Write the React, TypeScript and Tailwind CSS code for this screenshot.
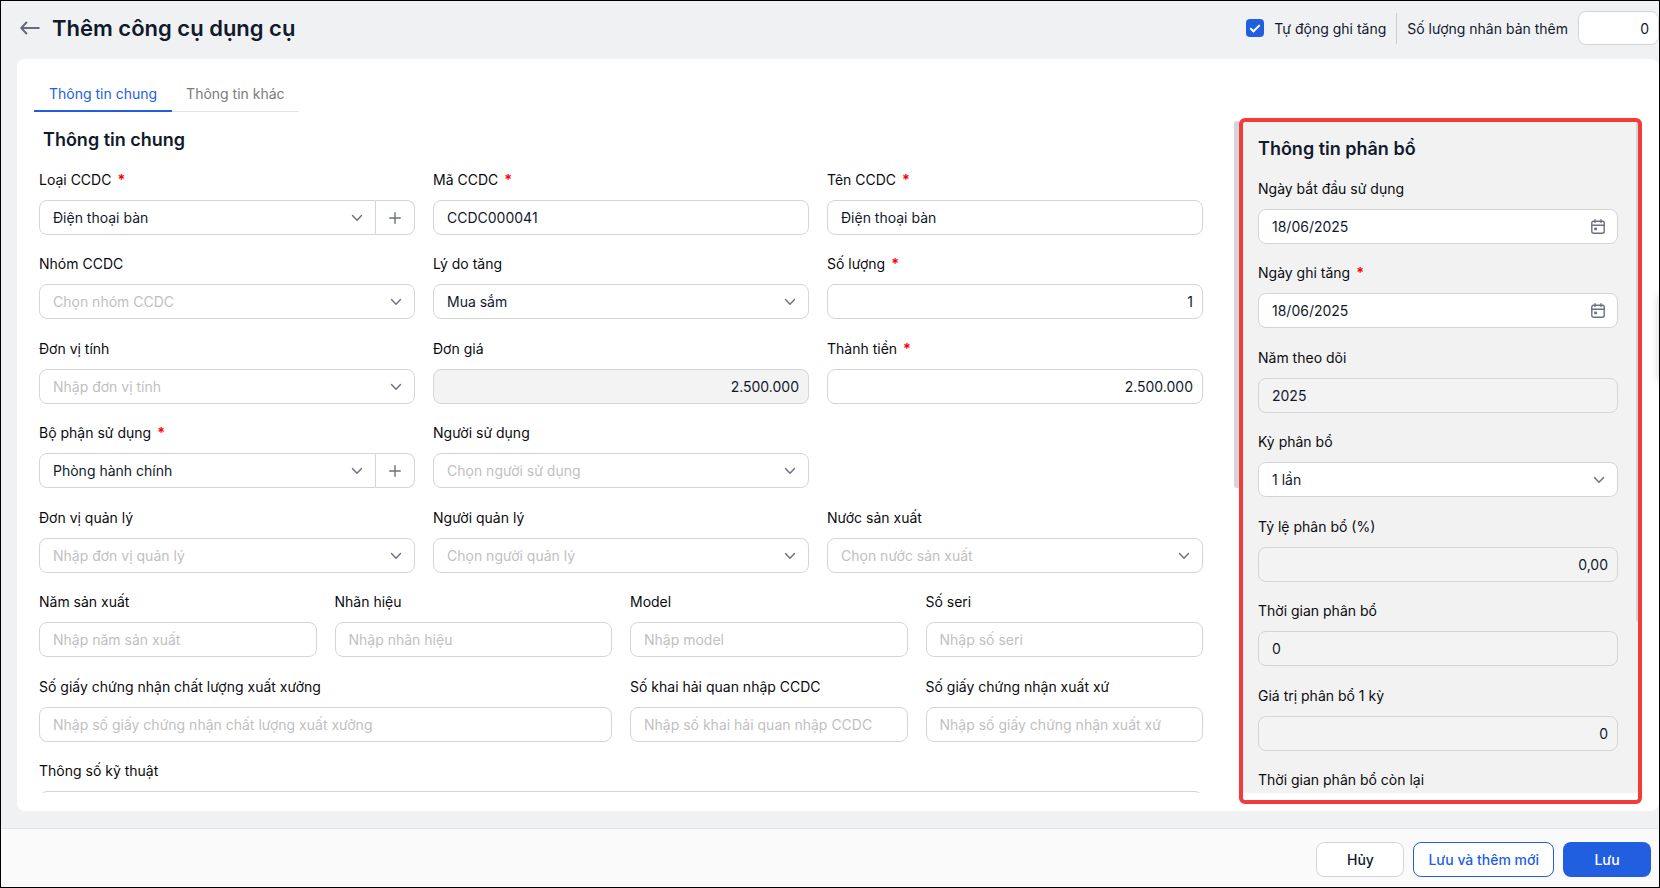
import { useId } from "react";
import type { ReactNode } from "react";

type Option = { value?: string; placeholder?: string };

const BOX =
  "h-[35px] w-full rounded-lg border border-[#d4d5d9] px-[13px] text-[14px] text-[#111a2c] outline-none placeholder:text-[#bfbfbf] disabled:bg-[#f3f3f3] disabled:text-[#111a2c] disabled:opacity-100";

const STACK = "flex flex-col gap-[18px] [&>*:nth-child(2n+3)]:mt-px";

function ArrowLeftIcon() {
  return (
    <svg width="20" height="14" viewBox="0 0 20 14" fill="none" stroke="#666b7c" strokeWidth="2" strokeLinecap="round" strokeLinejoin="round" aria-hidden="true">
      <path d="M18.8 7H1.4M6.4 1.5 1.3 7l5.1 5.5" />
    </svg>
  );
}

function ChevronIcon() {
  return (
    <svg width="12" height="12" viewBox="0 0 12 12" fill="none" stroke="#6b7080" strokeWidth="1.4" strokeLinecap="round" strokeLinejoin="round" aria-hidden="true">
      <path d="M1.5 3.6 6 8.2l4.5-4.6" />
    </svg>
  );
}

function PlusIcon() {
  return (
    <svg width="12" height="12" viewBox="0 0 12 12" fill="none" stroke="#6b7080" strokeWidth="1.4" strokeLinecap="round" aria-hidden="true">
      <path d="M6 .7v10.6M.7 6h10.6" />
    </svg>
  );
}

function CalendarIcon() {
  return (
    <svg width="14" height="15" viewBox="0 0 14 15" fill="none" stroke="#6b7080" strokeWidth="1.4" strokeLinecap="round" strokeLinejoin="round" aria-hidden="true">
      <rect x="0.8" y="2.2" width="12.4" height="12" rx="1.8" />
      <path d="M.8 6.2h12.4M4 .7v2.8M10 .7v2.8" />
      <rect x="3.2" y="8.6" width="2.8" height="2.6" fill="#6b7080" stroke="none" />
    </svg>
  );
}

function Field({ label, required, className, children }: { label: string; required?: boolean; className?: string; children: (id: string) => ReactNode }) {
  const id = useId();
  return (
    <div className={"flex min-w-0 flex-col gap-[9px] " + (className ?? "")}>
      <label htmlFor={id} className="text-[14px] leading-[22px] whitespace-nowrap text-[#0b0b0f]">
        {label}
        {required && <span className="ml-[6px] font-bold text-[#ff0000]">*</span>}
      </label>
      {children(id)}
    </div>
  );
}

function TextField(props: { label: string; required?: boolean; value?: string; placeholder?: string; right?: boolean; disabled?: boolean; className?: string }) {
  return (
    <Field label={props.label} required={props.required} className={props.className}>
      {(id) => (
        <input
          id={id}
          type="text"
          defaultValue={props.value}
          placeholder={props.placeholder}
          disabled={props.disabled}
          className={BOX + (props.right ? " pr-[9px] text-right" : "")}
        />
      )}
    </Field>
  );
}

function SelectBox({ id, value, placeholder }: Option & { id: string }) {
  return (
    <div className="relative w-full min-w-0">
      <select
        id={id}
        defaultValue={value ?? ""}
        className={BOX + " appearance-none bg-white pr-8" + (value ? "" : " text-[#bfbfbf]!")}
      >
        {placeholder && <option value="">{placeholder}</option>}
        {value && <option value={value}>{value}</option>}
      </select>
      <span className="pointer-events-none absolute inset-y-0 right-[13px] flex items-center">
        <ChevronIcon />
      </span>
    </div>
  );
}

function SelectField(props: Option & { label: string; required?: boolean }) {
  return (
    <Field label={props.label} required={props.required}>
      {(id) => <SelectBox id={id} value={props.value} placeholder={props.placeholder} />}
    </Field>
  );
}

function SelectAddField(props: { label: string; value: string }) {
  return (
    <Field label={props.label} required>
      {(id) => (
        <div className="flex [&_select]:rounded-r-none">
          <SelectBox id={id} value={props.value} />
          <button type="button" aria-label="Thêm" className="flex h-[35px] w-[39px] shrink-0 items-center justify-center rounded-r-lg border border-l-0 border-[#d4d5d9]">
            <PlusIcon />
          </button>
        </div>
      )}
    </Field>
  );
}

function DateField(props: { label: string; required?: boolean; value: string }) {
  return (
    <Field label={props.label} required={props.required}>
      {(id) => (
        <div className="relative">
          <input id={id} type="text" defaultValue={props.value} className={BOX + " bg-white pr-10"} />
          <button type="button" aria-label="Chọn ngày" className="absolute inset-y-0 right-[13px] flex items-center">
            <CalendarIcon />
          </button>
        </div>
      )}
    </Field>
  );
}

function Row({ cols, children }: { cols: 3 | 4; children: ReactNode }) {
  return <div className={"grid gap-[18px] " + (cols === 3 ? "grid-cols-3" : "grid-cols-4")}>{children}</div>;
}

function GeneralForm() {
  return (
    <section className="min-w-0 flex-1 overflow-hidden pr-9 pl-[5px]">
      <h2 className="mt-[7px] mb-[17px] ml-1 text-lg leading-6 font-semibold text-[#111a2c]">Thông tin chung</h2>
      <div className={STACK}>
        <Row cols={3}>
          <SelectAddField label="Loại CCDC" value="Điện thoại bàn" />
          <TextField label="Mã CCDC" required value="CCDC000041" />
          <TextField label="Tên CCDC" required value="Điện thoại bàn" />
        </Row>
        <Row cols={3}>
          <SelectField label="Nhóm CCDC" placeholder="Chọn nhóm CCDC" />
          <SelectField label="Lý do tăng" value="Mua sắm" />
          <TextField label="Số lượng" required value="1" right />
        </Row>
        <Row cols={3}>
          <SelectField label="Đơn vị tính" placeholder="Nhập đơn vị tính" />
          <TextField label="Đơn giá" value="2.500.000" right disabled />
          <TextField label="Thành tiền" required value="2.500.000" right />
        </Row>
        <Row cols={3}>
          <SelectAddField label="Bộ phận sử dụng" value="Phòng hành chính" />
          <SelectField label="Người sử dụng" placeholder="Chọn người sử dụng" />
        </Row>
        <Row cols={3}>
          <SelectField label="Đơn vị quản lý" placeholder="Nhập đơn vị quản lý" />
          <SelectField label="Người quản lý" placeholder="Chọn người quản lý" />
          <SelectField label="Nước sản xuất" placeholder="Chọn nước sản xuất" />
        </Row>
        <Row cols={4}>
          <TextField label="Năm sản xuất" placeholder="Nhập năm sản xuất" />
          <TextField label="Nhãn hiệu" placeholder="Nhập nhãn hiệu" />
          <TextField label="Model" placeholder="Nhập model" />
          <TextField label="Số seri" placeholder="Nhập số seri" />
        </Row>
        <Row cols={4}>
          <TextField className="col-span-2" label="Số giấy chứng nhận chất lượng xuất xưởng" placeholder="Nhập số giấy chứng nhận chất lượng xuất xưởng" />
          <TextField label="Số khai hải quan nhập CCDC" placeholder="Nhập số khai hải quan nhập CCDC" />
          <TextField label="Số giấy chứng nhận xuất xứ" placeholder="Nhập số giấy chứng nhận xuất xứ" />
        </Row>
        <Field label="Thông số kỹ thuật">
          {(id) => <textarea id={id} rows={3} className="w-full resize-none rounded-lg border border-[#d4d5d9] px-[13px] py-2 text-[14px]" />}
        </Field>
      </div>
    </section>
  );
}

function AllocationPanel() {
  return (
    <aside className="relative w-[403px] shrink-0">
      <div className="h-full overflow-hidden rounded-lg bg-[#f2f2f2] pt-4 pr-6 pl-[19px]">
        <h2 className="mb-[17px] text-lg leading-6 font-semibold text-[#111a2c]">Thông tin phân bổ</h2>
        <div className={STACK}>
          <DateField label="Ngày bắt đầu sử dụng" value="18/06/2025" />
          <DateField label="Ngày ghi tăng" required value="18/06/2025" />
          <TextField label="Năm theo dõi" value="2025" disabled />
          <SelectField label="Kỳ phân bổ" value="1 lần" />
          <TextField label="Tỷ lệ phân bổ (%)" value="0,00" right disabled />
          <TextField label="Thời gian phân bổ" value="0" disabled />
          <TextField label="Giá trị phân bổ 1 kỳ" value="0" right disabled />
          <TextField label="Thời gian phân bổ còn lại" value="0" disabled />
        </div>
      </div>
      <span className="absolute top-0 -left-[5px] h-[367px] w-[6px] rounded-full bg-[#d4d5da]" />
      <span className="absolute top-0 right-0 h-[501px] w-[6px] rounded-full bg-[#d4d5da]" />
      <span className="pointer-events-none absolute -top-[3px] right-0 -bottom-[11px] left-0 rounded-md border-4 border-[#f43b3b]" />
    </aside>
  );
}

export default function App() {
  const autoId = useId();
  const countId = useId();
  return (
    <div className="flex h-screen flex-col overflow-hidden border border-black bg-[#f0f1f3] font-['Inter',sans-serif] text-[14px] text-[#111a2c]">
      <header className="flex h-[58px] shrink-0 items-center pb-1">
        <a href="#" aria-label="Quay lại" className="ml-[19px]">
          <ArrowLeftIcon />
        </a>
        <h1 className="ml-3 text-[22px] leading-8 font-semibold">Thêm công cụ dụng cụ</h1>
        <div className="ml-auto flex items-center">
          <span className="relative flex size-[18px]">
            <input id={autoId} type="checkbox" defaultChecked className="peer size-[18px] appearance-none rounded bg-white checked:bg-[#225fe0]" />
            <svg className="pointer-events-none absolute inset-0" width="18" height="18" viewBox="0 0 18 18" fill="none" stroke="#fff" strokeWidth="2" aria-hidden="true">
              <path d="m4.3 9.2 3.2 3.1 6.2-6.2" />
            </svg>
          </span>
          <label htmlFor={autoId} className="ml-[10px]">Tự động ghi tăng</label>
          <span className="mx-[10px] h-[31px] w-px bg-[#c9cbd4]" />
          <label htmlFor={countId}>Số lượng nhân bản thêm</label>
          <input id={countId} type="text" defaultValue="0" className="ml-[10px] h-[34px] w-[81px] rounded-lg border border-[#d4d5d9] bg-white px-[9px] text-right outline-none" />
        </div>
      </header>

      <main className="relative ml-4 flex min-h-0 flex-1 flex-col rounded-lg bg-white pt-[17px] pb-[18px] pl-[17px]">
        <nav className="flex shrink-0 self-start border-b border-[#e4e5e8]">
          <a href="#chung" className="-mb-px flex h-9 items-center border-b-2 border-[#225fe0] px-[15px] pt-px text-[#225fe0]">Thông tin chung</a>
          <a href="#khac" className="flex h-[35px] items-center px-[14px] text-[#7b7c80]">Thông tin khác</a>
        </nav>
        <div className="mt-[9px] flex min-h-0 flex-1 pr-[17px]">
          <GeneralForm />
          <AllocationPanel />
        </div>
        <span className="absolute top-[236px] left-full h-[86px] w-2 shadow-[0_0_8px_rgba(0,0,0,0.2)]" />
      </main>

      <footer className="mt-[17px] flex h-[59px] shrink-0 items-center justify-end gap-[9px] border-t border-[#e4e5e8] bg-[#fafafa] pt-[2px] pr-2">
        <button type="button" className="h-[35px] w-[88px] rounded-lg border border-[#d4d5d9] bg-white font-medium">Hủy</button>
        <button type="button" className="h-[35px] rounded-lg border border-[#225fe0] bg-white px-[14px] font-medium text-[#225fe0]">Lưu và thêm mới</button>
        <button type="button" className="h-[35px] w-[88px] rounded-lg bg-[#225fe0] font-medium text-white">Lưu</button>
      </footer>
    </div>
  );
}
